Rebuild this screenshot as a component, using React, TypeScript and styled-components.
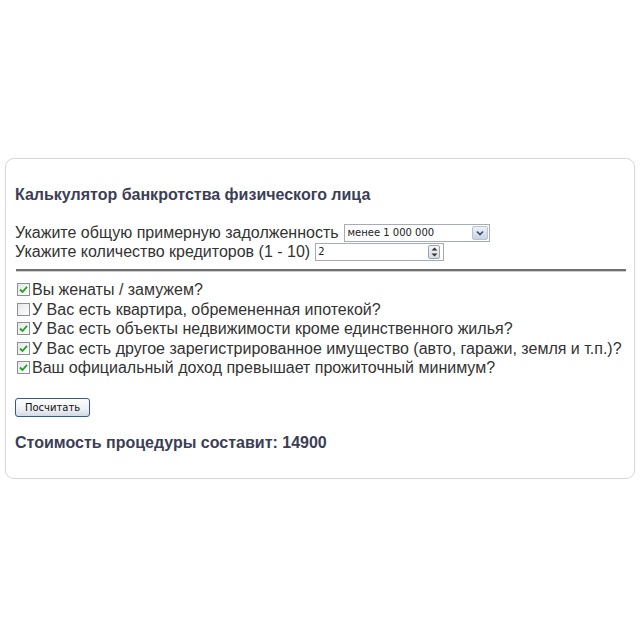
import React from "react";
import styled, { createGlobalStyle } from "styled-components";

const Global = createGlobalStyle`
  html, body { margin: 0; padding: 0; background: #fff; }
  body { font-family: "Liberation Sans", Arial, sans-serif; }
`;

const Page = styled.div`
  width: 640px;
  height: 640px;
  padding: 158px 5px 0 5px;
  box-sizing: border-box;
`;

const Card = styled.div`
  border: 1px solid #d9d9d9;
  border-radius: 9px;
  padding: 27px 9px 24px 9px;
  height: 321px;
  box-sizing: border-box;
  color: #333;
  box-shadow: 0 0 2px rgba(0,0,0,0.06);
`;

const Title = styled.div`
  font-size: 16px;
  font-weight: bold;
  color: #3b3e56;
  line-height: 18px;
  margin-bottom: 19px;
`;

const FieldRow = styled.div`
  display: flex;
  align-items: center;
  font-size: 16px;
  line-height: 19px;
  height: 19px;
  gap: 5px;
`;

const SelectBox = styled.div`
  width: 146px;
  height: 18px;
  box-sizing: border-box;
  border: 1px solid #a5acb5;
  display: flex;
  align-items: center;
  justify-content: space-between;
  font-family: "DejaVu Sans", sans-serif;
  font-size: 10px;
  color: #222;
  padding-left: 3px;
  background: #fff;
`;

const DropBtn = styled.div`
  width: 16px;
  height: 14px;
  margin-right: 1px;
  border: 1px solid #b8c4d6;
  border-radius: 2px;
  background: linear-gradient(#eef1f7, #c9d3e6);
  display: flex;
  align-items: center;
  justify-content: center;
  box-sizing: border-box;
`;

const NumberBox = styled.div`
  width: 129px;
  height: 18px;
  box-sizing: border-box;
  border: 1px solid #a5acb5;
  display: flex;
  align-items: center;
  justify-content: space-between;
  font-family: "DejaVu Sans", sans-serif;
  font-size: 10px;
  color: #222;
  padding-left: 2px;
  background: #fff;
`;

const Spinner = styled.div`
  width: 12px;
  height: 14px;
  margin-right: 3px;
  border: 1px solid #9aa3ae;
  border-radius: 2px;
  background: linear-gradient(#f4f5f7, #d7dbe2);
  display: flex;
  flex-direction: column;
  align-items: center;
  justify-content: space-around;
  box-sizing: border-box;
`;

const Rule = styled.div`
  height: 2px;
  background: #707070;
  border-bottom: 1px solid #cfcfcf;
  margin: 8px 0 8px 1px;
  width: 610px;
`;

const CheckList = styled.div`
  display: flex;
  flex-direction: column;
`;

const CheckRow = styled.div`
  display: flex;
  align-items: center;
  font-size: 16px;
  line-height: 19.5px;
  height: 19.5px;
  padding-left: 2px;
`;

const Box = styled.span<{ $checked: boolean }>`
  width: 13px;
  height: 13px;
  box-sizing: border-box;
  border: 1px solid #8c9199;
  background: linear-gradient(135deg, #e6e6e6, #ffffff);
  display: inline-flex;
  align-items: center;
  justify-content: center;
  margin-right: 2px;
  flex: none;
`;

const Button = styled.div`
  margin-top: 20px;
  width: 75px;
  height: 19px;
  box-sizing: border-box;
  border: 1px solid #2d5a9c;
  border-radius: 3px;
  background: linear-gradient(#ffffff, #eef0f4 60%, #d3d8e2);
  font-family: "DejaVu Sans", sans-serif;
  font-size: 10px;
  display: flex;
  align-items: center;
  justify-content: center;
  color: #111;
`;

const Result = styled.div`
  margin-top: 17px;
  font-size: 16px;
  font-weight: bold;
  color: #3b3e56;
  line-height: 18px;
`;

const Check = () => (
  <svg width="9" height="9" viewBox="0 0 9 9">
    <path d="M1 4.5 L3.5 7 L8 1.8" fill="none" stroke="#21a121" strokeWidth="1.8" />
  </svg>
);

const items: [string, boolean][] = [
  ["Вы женаты / замужем?", true],
  ["У Вас есть квартира, обремененная ипотекой?", false],
  ["У Вас есть объекты недвижимости кроме единственного жилья?", true],
  ["У Вас есть другое зарегистрированное имущество (авто, гаражи, земля и т.п.)?", true],
  ["Ваш официальный доход превышает прожиточный минимум?", true],
];

export default function App() {
  return (
    <>
      <Global />
      <Page>
        <Card>
          <Title>Калькулятор банкротства физического лица</Title>
          <FieldRow>
            Укажите общую примерную задолженность
            <SelectBox>
              менее 1 000 000
              <DropBtn>
                <svg width="8" height="6" viewBox="0 0 8 6">
                  <path d="M1 1.5 L4 4.5 L7 1.5" fill="none" stroke="#3c4a63" strokeWidth="1.6" />
                </svg>
              </DropBtn>
            </SelectBox>
          </FieldRow>
          <FieldRow>
            Укажите количество кредиторов (1 - 10)
            <NumberBox>
              2
              <Spinner>
                <svg width="7" height="4" viewBox="0 0 7 4">
                  <path d="M0.5 3.5 L3.5 0.5 L6.5 3.5Z" fill="#333" />
                </svg>
                <svg width="7" height="4" viewBox="0 0 7 4">
                  <path d="M0.5 0.5 L3.5 3.5 L6.5 0.5Z" fill="#333" />
                </svg>
              </Spinner>
            </NumberBox>
          </FieldRow>
          <Rule />
          <CheckList>
            {items.map(([t, c]) => (
              <CheckRow key={t}>
                <Box $checked={c}>{c && <Check />}</Box>
                {t}
              </CheckRow>
            ))}
          </CheckList>
          <Button>Посчитать</Button>
          <Result>Стоимость процедуры составит: 14900</Result>
        </Card>
      </Page>
    </>
  );
}
